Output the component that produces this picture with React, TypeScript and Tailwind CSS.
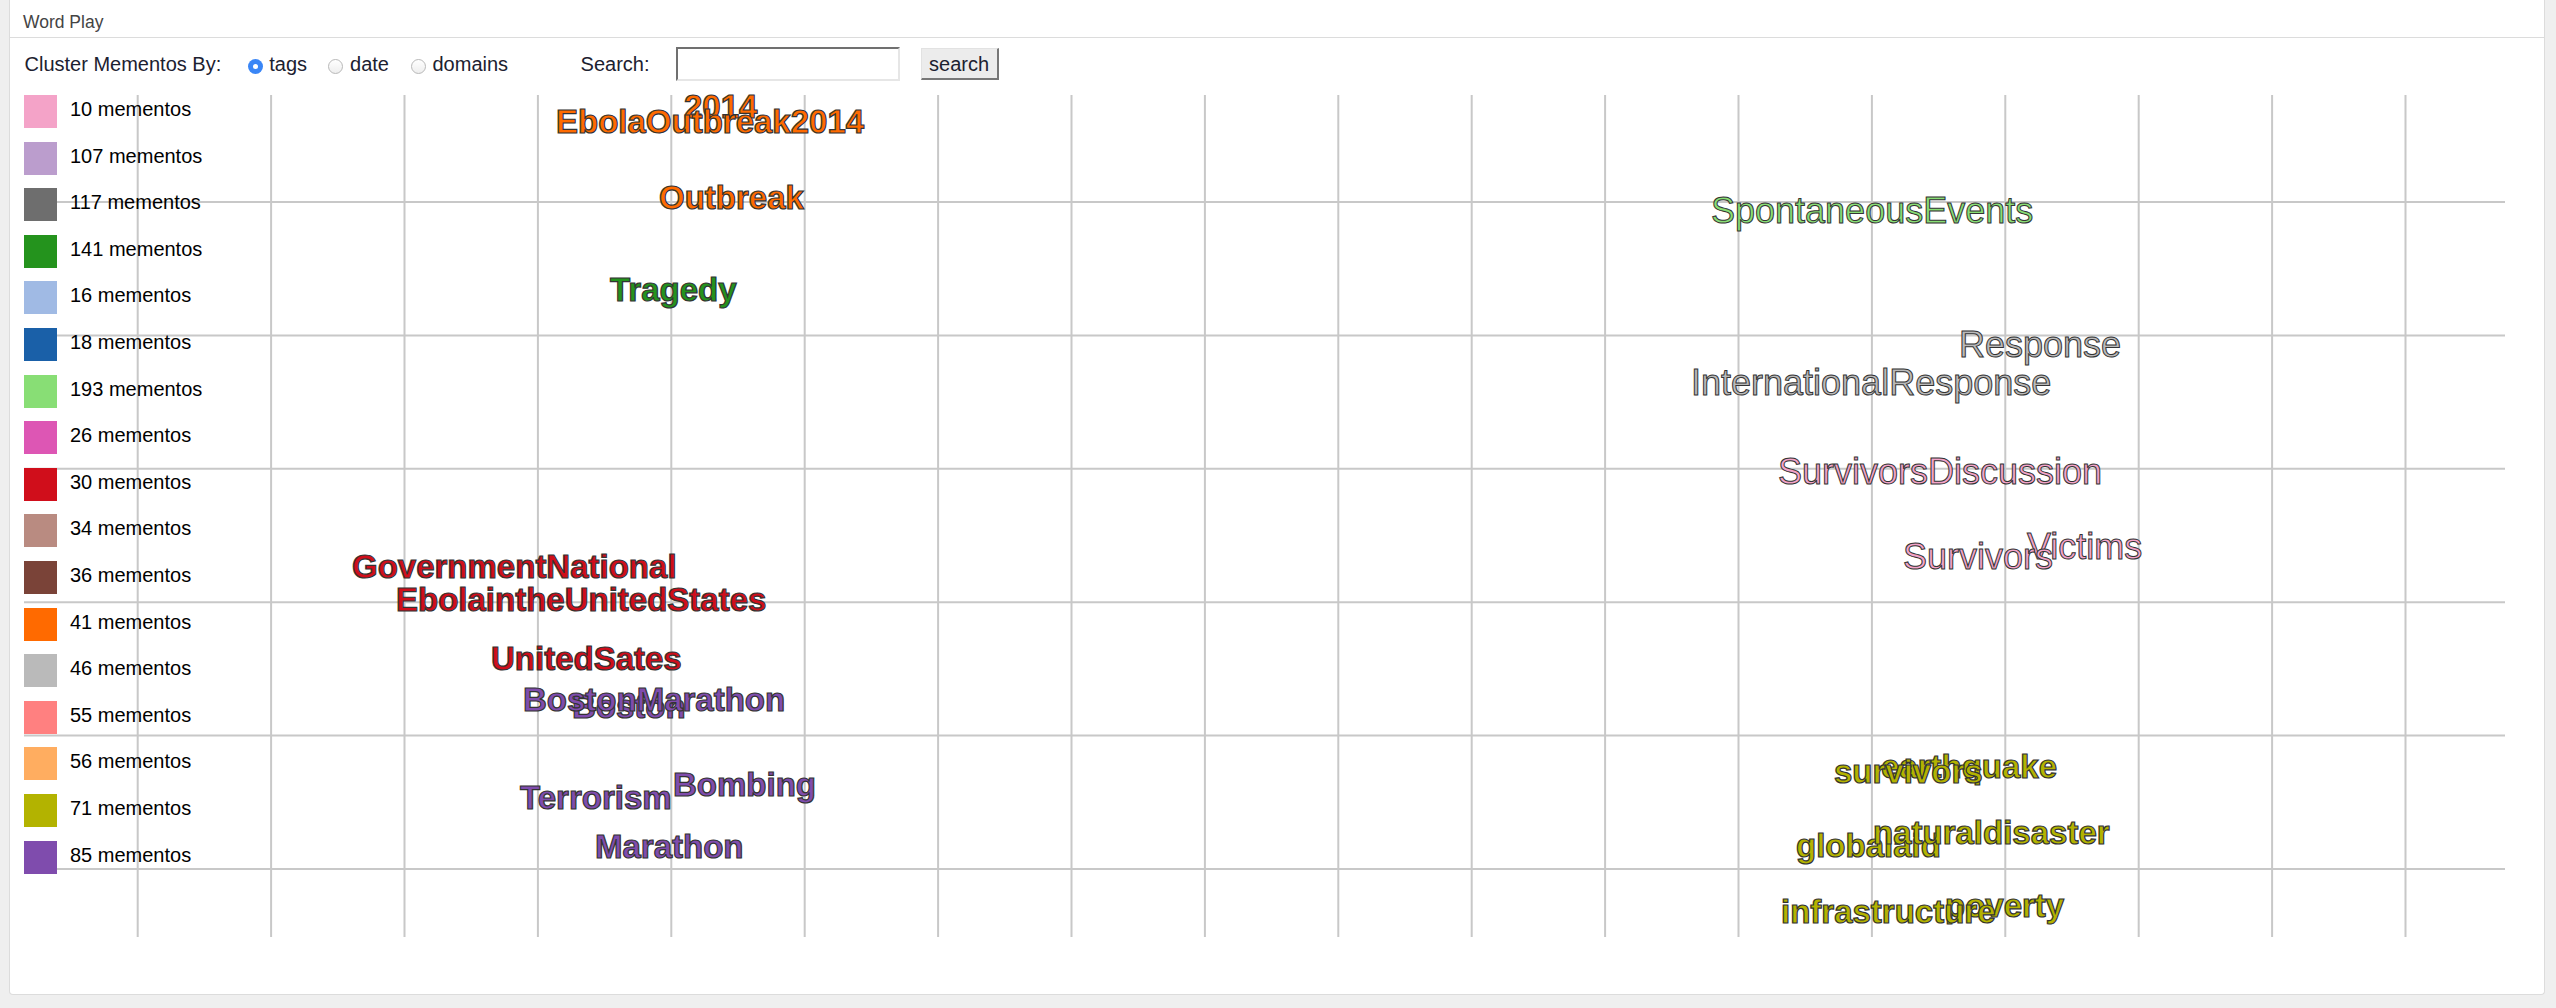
import React from 'react';

const LEGEND = [
  { count: 10, color: '#f4a3c8' },
  { count: 107, color: '#bb9dcd' },
  { count: 117, color: '#6e6e6e' },
  { count: 141, color: '#24931d' },
  { count: 16, color: '#a0bae4' },
  { count: 18, color: '#1a60a8' },
  { count: 193, color: '#88de75' },
  { count: 26, color: '#dd56b4' },
  { count: 30, color: '#d00e1b' },
  { count: 34, color: '#b98b81' },
  { count: 36, color: '#7a4338' },
  { count: 41, color: '#ff6a00' },
  { count: 46, color: '#bababa' },
  { count: 55, color: '#ff8080' },
  { count: 56, color: '#ffad60' },
  { count: 71, color: '#b3b300' },
  { count: 85, color: '#7f4cad' },
];

type Word = { text: string; x: number; y: number; color: string; bold: boolean };

// positions are page coordinates (left edge, baseline)
const WORDS: Word[] = [
  { text: '2014', x: 684, y: 118, color: '#ff6a00', bold: true },
  { text: 'EbolaOutbreak2014', x: 556, y: 133, color: '#ff6a00', bold: true },
  { text: 'Outbreak', x: 659, y: 209, color: '#ff6a00', bold: true },
  { text: 'Tragedy', x: 610, y: 301, color: '#24931d', bold: true },
  { text: 'GovernmentNational', x: 352, y: 578, color: '#d00e1b', bold: true },
  { text: 'EbolaintheUnitedStates', x: 396, y: 611, color: '#d00e1b', bold: true },
  { text: 'UnitedSates', x: 491, y: 670, color: '#d00e1b', bold: true },
  { text: 'Boston', x: 572, y: 718, color: '#7f4cad', bold: true },
  { text: 'BostonMarathon', x: 523, y: 711, color: '#7f4cad', bold: true },
  { text: 'Terrorism', x: 520, y: 809, color: '#7f4cad', bold: true },
  { text: 'Bombing', x: 673, y: 796, color: '#7f4cad', bold: true },
  { text: 'Marathon', x: 595, y: 858, color: '#7f4cad', bold: true },
  { text: 'SpontaneousEvents', x: 1711, y: 223, color: '#88de75', bold: false },
  { text: 'Response', x: 1959, y: 357, color: '#bababa', bold: false },
  { text: 'InternationalResponse', x: 1691, y: 395, color: '#bababa', bold: false },
  { text: 'SurvivorsDiscussion', x: 1778, y: 484, color: '#f4a3c8', bold: false },
  { text: 'Victims', x: 2027, y: 559, color: '#f4a3c8', bold: false },
  { text: 'Survivors', x: 1903, y: 569, color: '#f4a3c8', bold: false },
  { text: 'earthquake', x: 1881, y: 778, color: '#b3b300', bold: true },
  { text: 'survivors', x: 1834, y: 783, color: '#b3b300', bold: true },
  { text: 'globalaid', x: 1796, y: 857, color: '#b3b300', bold: true },
  { text: 'naturaldisaster', x: 1873, y: 844, color: '#b3b300', bold: true },
  { text: 'poverty', x: 1945, y: 917, color: '#b3b300', bold: true },
  { text: 'infrastructure', x: 1781, y: 923, color: '#b3b300', bold: true },
];

const V_LINES = Array.from({ length: 18 }, (_, k) => 137.7 + 133.4 * k);
const H_LINES = [1, 2, 3, 4, 5, 6].map((j) => 68.6 + 133.4 * j);

const Radio = ({ checked, className }: { checked?: boolean; className?: string }) =>
  checked ? (
    <span className={`flex h-[15px] w-[15px] items-center justify-center rounded-full bg-[#3a86f6] ${className ?? ''}`}>
      <span className="h-[5px] w-[5px] rounded-full bg-white" />
    </span>
  ) : (
    <span
      className={`h-[15px] w-[15px] rounded-full border border-[#b8b8b8] bg-gradient-to-b from-white to-[#eeeeee] ${className ?? ''}`}
    />
  );

export default function App() {
  return (
    <div className="h-[1008px] w-[2556px] bg-[#efefef] pl-[9px] pr-[11px] font-['Liberation_Sans',Arial,sans-serif]">
      <div className="h-[995px] rounded-b-[4px] border-x border-b border-[#dcdcdc] bg-white">
        <div className="h-[38px] border-b border-[#dcdcdc] pl-[13px] pt-[13px] text-[17.5px] leading-[18px] text-[#444]">
          Word Play
        </div>

        <div className="flex h-[52px] items-center pl-[14.5px] text-[20px] text-[#1c2130]">
          <span>Cluster Mementos By:</span>
          <Radio checked className="ml-[27px] mt-[4px]" />
          <span className="ml-[6px]">tags</span>
          <Radio className="ml-[21px] mt-[4px]" />
          <span className="ml-[7px]">date</span>
          <Radio className="ml-[22px] mt-[4px]" />
          <span className="ml-[6.5px]">domains</span>
          <span className="ml-[72.5px]">Search:</span>
          <input
            type="text"
            className="ml-[26.5px] h-[34px] w-[224px] border-2 border-b-[#e6e6e6] border-l-[#707070] border-r-[#e6e6e6] border-t-[#707070] bg-white outline-none"
          />
          <button
            type="button"
            className="ml-[20.5px] h-[32px] w-[78px] border border-b-2 border-r-2 border-b-[#777] border-l-[#e2e2e2] border-r-[#777] border-t-[#e2e2e2] bg-[#ececec] text-[20px] leading-none text-[#1c2130]"
          >
            search
          </button>
        </div>

        <div className="relative h-[904px] pl-[14px] pt-[5px]">
          <svg className="absolute inset-0" width="2534" height="904">
            <g transform="translate(-10 -90)">
              {V_LINES.map((x) => (
                <line key={`v${x}`} x1={x} x2={x} y1={95} y2={937} stroke="#c8c8c8" strokeWidth={2} />
              ))}
              {H_LINES.map((y) => (
                <line key={`h${y}`} x1={24} x2={2505} y1={y} y2={y} stroke="#c8c8c8" strokeWidth={2} />
              ))}
              {WORDS.map((w) => (
                <text
                  key={w.text}
                  x={w.x}
                  y={w.y}
                  fill={w.color}
                  stroke="#333"
                  strokeWidth={w.bold ? 1.2 : 1}
                  fontSize={w.bold ? 33 : 36}
                  fontWeight={w.bold ? 700 : 400}
                  fontFamily="'Liberation Sans', Arial, sans-serif"
                >
                  {w.text}
                </text>
              ))}
            </g>
          </svg>

          <div className="relative flex flex-col gap-[13.6px]">
            {LEGEND.map((item) => (
              <div key={item.count} className="flex items-start">
                <div className="h-[33px] w-[33px]" style={{ backgroundColor: item.color }} />
                <span className="ml-[13px] text-[20px] leading-[29px] text-black">{item.count} mementos</span>
              </div>
            ))}
          </div>
        </div>
      </div>
    </div>
  );
}
